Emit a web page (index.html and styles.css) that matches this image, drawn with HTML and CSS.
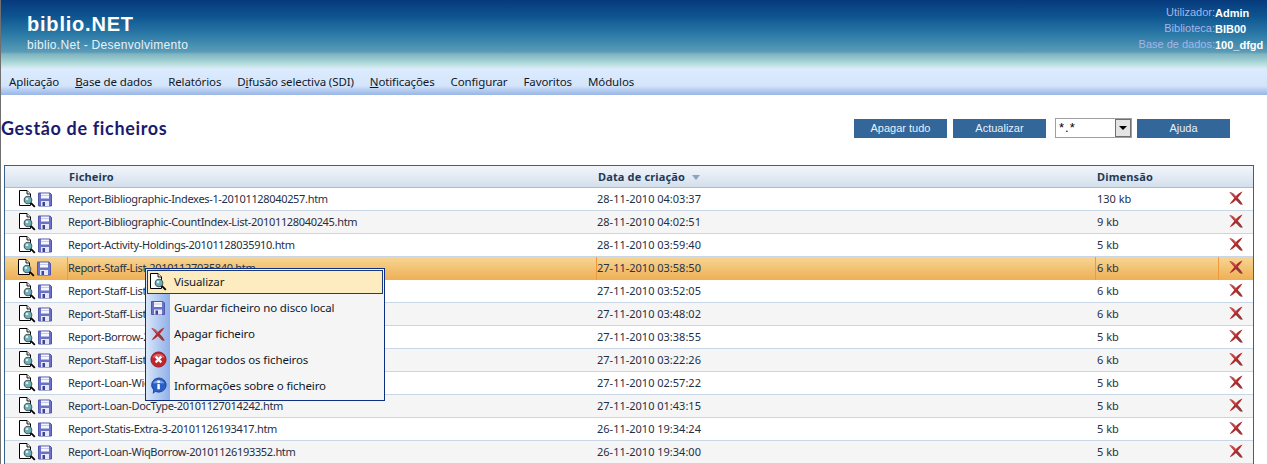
FILE: index.html
```html
<!DOCTYPE html>
<html lang="pt">
<head>
<meta charset="utf-8">
<title>Gestão de ficheiros</title>
<link rel="stylesheet" href="styles.css">
</head>
<body>
<svg class="defs" width="0" height="0" aria-hidden="true">
  <defs>
    <symbol id="i-view" viewBox="0 0 18 18">
      <path d="M1.500 .5H9L12.500 4V15.500H1.500Z" fill="#fff" stroke="#000"/>
      <path d="M9 .5V4H12.500" fill="#f0f0f0" stroke="#000" stroke-width=".9"/>
      <circle cx="10" cy="10" r="3.800" fill="#6cb0b6" stroke="#4a5a60" stroke-width="1.100"/>
      <circle cx="9" cy="9" r="1.300" fill="#d4f2f2"/>
      <path d="M12.800 12.800L16.800 16.800" stroke="#000" stroke-width="1.800"/>
    </symbol>
    <symbol id="i-save" viewBox="0 0 14 14">
      <path d="M.5 .5H12L13.500 2V13.500H.5Z" fill="#6b72c6" stroke="#4f57ac"/>
      <rect x="3" y="1" width="8" height="5" fill="#f6f7fd"/>
      <rect x="3" y="2.500" width="8" height="1" fill="#c6cae8"/>
      <rect x="3" y="8.500" width="8" height="5" fill="#e6e8f7"/>
      <rect x="4.500" y="9.500" width="2.500" height="4" fill="#3c4496"/>
    </symbol>
    <symbol id="i-del" viewBox="0 0 14 14">
      <path d="M.3 1.200C2.800 .8 4.500 2.300 7 5C9 3 11 1.200 13.500 .5C12.500 2.500 10.500 4.800 8.700 7C10.500 9 12.300 11 13.700 13.400L11.200 13.200L7 8.900C5.200 10.700 3 12.400 .6 13.300C1.800 11.500 3.500 9.200 5.300 7C3.500 4.800 2 3 .3 1.200Z" fill="#b32a2c"/>
      <path d="M7 8.900L11.200 13.200L13.700 13.400C12.300 11 10.500 9 8.700 7Z" fill="#8e3c3c"/>
      <path d="M2 2C3.800 2.900 5.300 4.600 7 6.400" fill="none" stroke="#e27c7e" stroke-width=".8"/>
    </symbol>
    <symbol id="i-delall" viewBox="0 0 18 18">
      <circle cx="9" cy="9" r="8" fill="#c4242c" stroke="#8e1c22"/>
      <path d="M2.500 7A7 6 0 0 1 15.500 7Z" fill="#e0666a"/>
      <path d="M6 6L12 12M12 6L6 12" stroke="#fff" stroke-width="2.400"/>
    </symbol>
    <symbol id="i-info" viewBox="0 0 18 18">
      <path d="M9 1A8 7.500 0 1 1 5.500 15.200L3.500 17.200L4 13.700A8 7.500 0 0 1 9 1Z" fill="#2a5fc8" stroke="#1c4596"/>
      <path d="M3 6.500A6.500 5 0 0 1 15 6.500Z" fill="#7ea6ea"/>
      <rect x="7.800" y="7.500" width="2.600" height="5.500" fill="#fff"/>
      <rect x="7.800" y="3.800" width="2.600" height="2.400" fill="#fff"/>
    </symbol>
  </defs>
</svg>

<div class="page">
  <header class="banner">
    <div class="brand">
      <div class="brand-name">biblio.NET</div>
      <div class="brand-sub">biblio.Net - Desenvolvimento</div>
    </div>
    <dl class="session">
      <div class="session-row"><dt>Utilizador:</dt><dd>Admin</dd></div>
      <div class="session-row"><dt>Biblioteca:</dt><dd>BIB00</dd></div>
      <div class="session-row"><dt>Base de dados:</dt><dd>100_dfgd</dd></div>
    </dl>
  </header>

  <nav class="menu">
    <a>Aplicação</a>
    <a><u>B</u>ase de dados</a>
    <a>Relatórios</a>
    <a>D<u>i</u>fusão selectiva (SDI)</a>
    <a><u>N</u>otificações</a>
    <a>Configurar</a>
    <a>Favoritos</a>
    <a>Módulos</a>
  </nav>

  <section class="toolbar">
    <h1 class="title">Gestão de ficheiros</h1>
    <div class="actions">
      <button class="btn">Apagar tudo</button>
      <button class="btn">Actualizar</button>
      <div class="combo"><span class="combo-value">*.*</span><span class="combo-arrow"></span></div>
      <button class="btn">Ajuda</button>
    </div>
  </section>

  <table class="grid">
    <colgroup>
      <col class="c-icons"><col class="c-name"><col class="c-date"><col class="c-size"><col class="c-del">
    </colgroup>
    <thead>
      <tr><th></th><th>Ficheiro</th><th>Data de criação <span class="sort"></span></th><th>Dimensão</th><th></th></tr>
    </thead>
    <tbody>
      <tr><td class="ic"><svg class="iv"><use href="#i-view"/></svg><svg class="is"><use href="#i-save"/></svg></td><td class="nm">Report-Bibliographic-Indexes-1-20101128040257.htm</td><td>28-11-2010 04:03:37</td><td class="sz">130 kb</td><td class="dl"><svg class="id"><use href="#i-del"/></svg></td></tr>
      <tr><td class="ic"><svg class="iv"><use href="#i-view"/></svg><svg class="is"><use href="#i-save"/></svg></td><td class="nm">Report-Bibliographic-CountIndex-List-20101128040245.htm</td><td>28-11-2010 04:02:51</td><td class="sz">9 kb</td><td class="dl"><svg class="id"><use href="#i-del"/></svg></td></tr>
      <tr><td class="ic"><svg class="iv"><use href="#i-view"/></svg><svg class="is"><use href="#i-save"/></svg></td><td class="nm">Report-Activity-Holdings-20101128035910.htm</td><td>28-11-2010 03:59:40</td><td class="sz">5 kb</td><td class="dl"><svg class="id"><use href="#i-del"/></svg></td></tr>
      <tr class="hot"><td class="ic"><svg class="iv"><use href="#i-view"/></svg><svg class="is"><use href="#i-save"/></svg></td><td class="nm">Report-Staff-List-20101127035840.htm</td><td>27-11-2010 03:58:50</td><td class="sz">6 kb</td><td class="dl"><svg class="id"><use href="#i-del"/></svg></td></tr>
      <tr><td class="ic"><svg class="iv"><use href="#i-view"/></svg><svg class="is"><use href="#i-save"/></svg></td><td class="nm">Report-Staff-List-20101127035157.htm</td><td>27-11-2010 03:52:05</td><td class="sz">6 kb</td><td class="dl"><svg class="id"><use href="#i-del"/></svg></td></tr>
      <tr><td class="ic"><svg class="iv"><use href="#i-view"/></svg><svg class="is"><use href="#i-save"/></svg></td><td class="nm">Report-Staff-List-20101127034752.htm</td><td>27-11-2010 03:48:02</td><td class="sz">6 kb</td><td class="dl"><svg class="id"><use href="#i-del"/></svg></td></tr>
      <tr><td class="ic"><svg class="iv"><use href="#i-view"/></svg><svg class="is"><use href="#i-save"/></svg></td><td class="nm">Report-Borrow-20101127033845.htm</td><td>27-11-2010 03:38:55</td><td class="sz">5 kb</td><td class="dl"><svg class="id"><use href="#i-del"/></svg></td></tr>
      <tr><td class="ic"><svg class="iv"><use href="#i-view"/></svg><svg class="is"><use href="#i-save"/></svg></td><td class="nm">Report-Staff-List-20101127032216.htm</td><td>27-11-2010 03:22:26</td><td class="sz">6 kb</td><td class="dl"><svg class="id"><use href="#i-del"/></svg></td></tr>
      <tr><td class="ic"><svg class="iv"><use href="#i-view"/></svg><svg class="is"><use href="#i-save"/></svg></td><td class="nm">Report-Loan-WiqBorrow-20101127025712.htm</td><td>27-11-2010 02:57:22</td><td class="sz">5 kb</td><td class="dl"><svg class="id"><use href="#i-del"/></svg></td></tr>
      <tr><td class="ic"><svg class="iv"><use href="#i-view"/></svg><svg class="is"><use href="#i-save"/></svg></td><td class="nm">Report-Loan-DocType-20101127014242.htm</td><td>27-11-2010 01:43:15</td><td class="sz">5 kb</td><td class="dl"><svg class="id"><use href="#i-del"/></svg></td></tr>
      <tr><td class="ic"><svg class="iv"><use href="#i-view"/></svg><svg class="is"><use href="#i-save"/></svg></td><td class="nm">Report-Statis-Extra-3-20101126193417.htm</td><td>26-11-2010 19:34:24</td><td class="sz">5 kb</td><td class="dl"><svg class="id"><use href="#i-del"/></svg></td></tr>
      <tr><td class="ic"><svg class="iv"><use href="#i-view"/></svg><svg class="is"><use href="#i-save"/></svg></td><td class="nm">Report-Loan-WiqBorrow-20101126193352.htm</td><td>26-11-2010 19:34:00</td><td class="sz">5 kb</td><td class="dl"><svg class="id"><use href="#i-del"/></svg></td></tr>
    </tbody>
  </table>
</div>

<ul class="ctx">
  <li class="ctx-item on"><svg class="ctx-ic"><use href="#i-view"/></svg>Visualizar</li>
  <li class="ctx-item"><svg class="ctx-ic sm"><use href="#i-save"/></svg>Guardar ficheiro no disco local</li>
  <li class="ctx-item"><svg class="ctx-ic sm"><use href="#i-del"/></svg>Apagar ficheiro</li>
  <li class="ctx-item"><svg class="ctx-ic lg"><use href="#i-delall"/></svg>Apagar todos os ficheiros</li>
  <li class="ctx-item"><svg class="ctx-ic lg"><use href="#i-info"/></svg>Informações sobre o ficheiro</li>
</ul>
</body>
</html>
```
FILE: styles.css
```css
* { box-sizing: border-box; }
html, body { margin: 0; padding: 0; height: 464px; overflow: hidden; background: #fff; }
body { font-family: "Noto Sans", "Liberation Sans", sans-serif; font-size: 11px; color: #1c3050; }
.defs { position: absolute; }
.page { border-left: 1px solid #707070; height: 464px; overflow: hidden; }

.banner {
  height: 69px;
  display: flex;
  justify-content: space-between;
  background: linear-gradient(to bottom, #073a7c 0, #0d5490 16px, #2a79a6 34px, #5a9cb8 52px, #7fb3c0 54px, #9ccdd0 60px, #c5e4e6 66px, #dcebfe 69px);
  font-family: "Liberation Sans", Arial, sans-serif;
}
.brand { padding: 13px 0 0 26px; }
.brand-name { font-size: 20px; font-weight: 700; line-height: 23px; color: #fff; letter-spacing: .8px; }
.brand-sub { font-size: 12px; line-height: 14px; margin-top: 2px; color: #e6f2f8; letter-spacing: .3px; }
.session { margin: 5px 2px 0 0; font-size: 11px; }
.session-row { display: flex; justify-content: flex-end; height: 16px; line-height: 15px; }
.session dt { color: #a5b4ea; }
.session dd { margin: 1px 0 0; width: 50px; color: #fff; font-weight: 700; }

.menu {
  height: 26px;
  display: flex;
  background: linear-gradient(to bottom, #dcebfe 0, #d4e5fb 17px, #bcd2f3 20px, #98b6e6 26px);
  font-size: 11.5px;
  letter-spacing: -.12px;
  line-height: 25px;
  color: #101828;
}
.menu a { padding: 0 8px; white-space: nowrap; }

.toolbar { height: 70px; display: flex; justify-content: space-between; }
.title {
  margin: 22px 0 0;
  font-family: Lato, sans-serif;
  font-size: 18px;
  font-weight: 700;
  line-height: 22px;
  letter-spacing: .65px;
  color: #1a1a6e;
}
.actions { display: flex; gap: 6px; margin: 23px 37px 0 0; align-items: flex-start; }
.btn {
  width: 93px; height: 19px; margin-top: 1px; padding: 0;
  border: 0; background: #336699; color: #e8f0f8;
  font: 11px/19px "Liberation Sans", Arial, sans-serif;
}
.combo {
  width: 77px; height: 20px; margin-left: 3px; margin-right: -1px;
  border: 1px solid #a0a0a0; background: #fff;
  display: flex; justify-content: space-between;
  font: 13px/14px "Liberation Sans", Arial, sans-serif; color: #000;
}
.combo-value { padding: 2px 3px; letter-spacing: 1px; }
.combo-arrow {
  width: 16px; height: 18px; border: 1px solid #707070; background: #e4e4e4; position: relative;
}
.combo-arrow::after {
  content: ""; position: absolute; left: 3px; top: 6px;
  border: 4px solid transparent; border-top: 4px solid #000; border-bottom: 0;
}

.grid {
  width: 1250px; margin-left: 3px;
  table-layout: fixed;
  border-collapse: separate; border-spacing: 0;
  border: 1px solid #38628e; border-bottom: 0;
}
.c-icons { width: 63px; }
.c-name { width: 529px; }
.c-date { width: 499px; }
.c-size { width: 123px; }
.c-del { width: 34px; }
.grid th {
  height: 22px; padding: 0 0 0 1px; text-align: left;
  font-size: 11px; font-weight: 700; color: #1f3a58;
  letter-spacing: .15px;
  background: linear-gradient(to bottom, #f2f6fb, #d4dfec);
  border-bottom: 1px solid #a9bcd4;
}
.grid td {
  height: 23px; padding: 0 0 2px 0;
  border-bottom: 1px solid #c9d6e6;
  white-space: nowrap; overflow: hidden;
  color: #1f2f45;
}
.grid td.nm { letter-spacing: -.33px; }
.grid td.sz { padding-left: 1px; }
.grid tbody tr:nth-child(even) td { background: #f5f5f5; }
.grid tr.hot td, .grid tbody tr.hot:nth-child(even) td {
  background: linear-gradient(to bottom, #f8d592, #eeb158);
  border-bottom-color: #eeb158;
  color: #24324a;
}
.grid tr.hot td + td { box-shadow: -1px 0 0 #ef9a3c; }
.sort {
  display: inline-block; margin-left: 4px; vertical-align: 1px;
  border: 4px solid transparent; border-top: 5px solid #8da2bc; border-bottom: 0;
}
.grid td.ic { padding: 0 0 0 13px; }
.grid tr.hot td.ic { padding-left: 12px; }
.iv { width: 18px; height: 18px; vertical-align: middle; }
.is { width: 14px; height: 15px; margin-left: 2px; vertical-align: middle; }
.grid td.dl { text-align: center; padding: 0 0 4px 0; }
.id { width: 14px; height: 14px; vertical-align: middle; }

.ctx {
  position: absolute; left: 145px; top: 268px;
  width: 240px; height: 133px;
  margin: 0; padding: 0 1px;
  list-style: none;
  border: 1px solid #0f2f80;
  background: linear-gradient(to right, #d8e6fa 0, #8fb0e8 24px, #f5f5f5 24px);
  font-size: 11.5px; letter-spacing: -.12px; color: #101828;
}
.ctx-item {
  height: 25.8px; display: flex; align-items: center; gap: 7px; padding-left: 1px;
  border: 1px solid transparent; white-space: nowrap;
}
.ctx-item.on { background: #fcecc0; border-color: #1c3a80; margin-top: 1px; height: 24px; padding-bottom: 1px; }
.ctx-item.on + .ctx-item { margin-top: 1px; }
.ctx-ic { width: 18px; height: 18px; flex: none; }
.ctx-ic.sm { width: 14px; height: 14px; margin: 0 2px; }
.ctx-ic.lg { width: 17px; height: 17px; margin: 0 .5px; }
```
